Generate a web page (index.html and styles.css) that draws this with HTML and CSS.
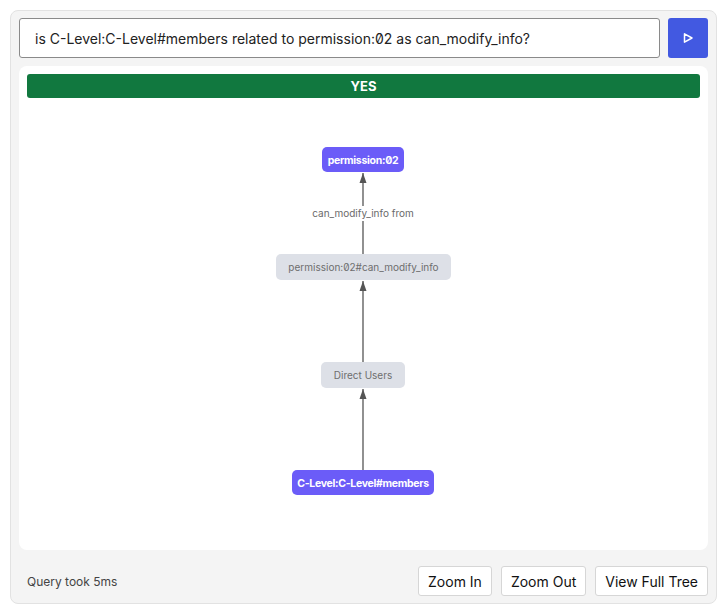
FILE: index.html
```html
<!DOCTYPE html>
<html>
<head>
<meta charset="utf-8">
<link rel="stylesheet" href="styles.css">
</head>
<body>
<div class="shell">
  <div class="query-row">
    <div class="query-input">is C-Level:C-Level#members related to permission:02 as can_modify_info?</div>
    <button class="run-btn" aria-label="Run">
      <svg width="12" height="12" viewBox="0 0 12 12"><path d="M2.5 1.8 L10 6 L2.5 10.2 Z" fill="none" stroke="#fff" stroke-width="1.5" stroke-linejoin="round"/></svg>
    </button>
  </div>
  <div class="panel">
    <div class="result">YES</div>
    <svg class="graph" width="689" height="484" viewBox="0 0 689 484">
      <defs>
        <marker id="arr" viewBox="0 0 10 10" refX="10" refY="5" markerWidth="8" markerHeight="8" orient="auto">
          <path d="M0 1.5 L10 5 L0 8.5 Z" fill="#555"/>
        </marker>
      </defs>
      <line x1="344" y1="188" x2="344" y2="107" stroke="#555" stroke-width="1.3" marker-end="url(#arr)"/>
      <line x1="344" y1="296" x2="344" y2="215" stroke="#555" stroke-width="1.3" marker-end="url(#arr)"/>
      <line x1="344" y1="404" x2="344" y2="323" stroke="#555" stroke-width="1.3" marker-end="url(#arr)"/>
      <rect x="290" y="140" width="108" height="15" fill="#fff"/>
      <text class="edge-label" x="344" y="151" text-anchor="middle">can_modify_info from</text>

      <rect x="303" y="81" width="82" height="25" rx="5" fill="#6b5cf8"/>
      <text class="node-strong" x="344" y="97.5" text-anchor="middle">permission:02</text>

      <rect x="257" y="188" width="175" height="26" rx="5" fill="#dde0e7"/>
      <text class="node-soft" x="344.5" y="205" text-anchor="middle">permission:02#can_modify_info</text>

      <rect x="302" y="296" width="84" height="26" rx="5" fill="#dde0e7"/>
      <text class="node-soft" x="344" y="313" text-anchor="middle">Direct Users</text>

      <rect x="273" y="404" width="142" height="25" rx="5" fill="#6b5cf8"/>
      <text class="node-strong" x="344" y="420.5" text-anchor="middle">C-Level:C-Level#members</text>
    </svg>
  </div>
  <div class="footer">
    <span class="timing">Query took 5ms</span>
    <div class="actions">
      <button class="action">Zoom In</button>
      <button class="action">Zoom Out</button>
      <button class="action">View Full Tree</button>
    </div>
  </div>
</div>
</body>
</html>
```
FILE: styles.css
```css
* { box-sizing: border-box; }
body {
  margin: 0;
  background: #fff;
  font-family: Inter, "Noto Sans", sans-serif;
  font-feature-settings: "zero" 1;
}
.shell {
  margin: 10px;
  width: 707px;
  height: 594px;
  background: #f4f4f4;
  border: 1px solid #e2e2e2;
  border-radius: 8px;
  padding: 7px 8px 0 8px;
  display: flex;
  flex-direction: column;
}
.query-row {
  display: flex;
  gap: 8px;
  height: 40px;
}
.query-input {
  flex: 1;
  background: #fff;
  border: 1px solid #8a8a8a;
  border-radius: 3px;
  padding: 0 15px;
  display: flex;
  align-items: center;
  font-size: 14px;
  color: #222;
}
.run-btn {
  width: 40px;
  height: 40px;
  border: none;
  border-radius: 3px;
  background: #4259e1;
  display: flex;
  align-items: center;
  justify-content: center;
  padding: 0;
}
.panel {
  position: relative;
  margin-top: 8px;
  height: 484px;
  background: #fff;
  border-radius: 8px;
  padding: 8px;
}
.result {
  height: 24px;
  background: #11783f;
  border-radius: 3px;
  color: #fff;
  font-weight: 700;
  font-size: 13px;
  display: flex;
  align-items: center;
  justify-content: center;
}
.graph {
  position: absolute;
  left: 0;
  top: 0;
}
.edge-label {
  font-size: 10px;
  fill: #6a6a6a;
}
.node-strong {
  font-size: 10.5px;
  font-weight: 700;
  fill: #fff;
  letter-spacing: -0.3px;
}
.node-soft {
  font-size: 10px;
  fill: #6e6e6e;
}
.footer {
  display: flex;
  align-items: center;
  justify-content: space-between;
  padding-top: 16px;
}
.timing {
  font-size: 12px;
  color: #444;
  padding-left: 8px;
}
.actions {
  display: flex;
  gap: 9px;
}
.action {
  height: 30px;
  padding: 0 9px;
  background: #fff;
  border: 1px solid #d6d6d6;
  border-radius: 3px;
  font-family: Inter, "Noto Sans", sans-serif;
  font-size: 14px;
  color: #111;
}
```
